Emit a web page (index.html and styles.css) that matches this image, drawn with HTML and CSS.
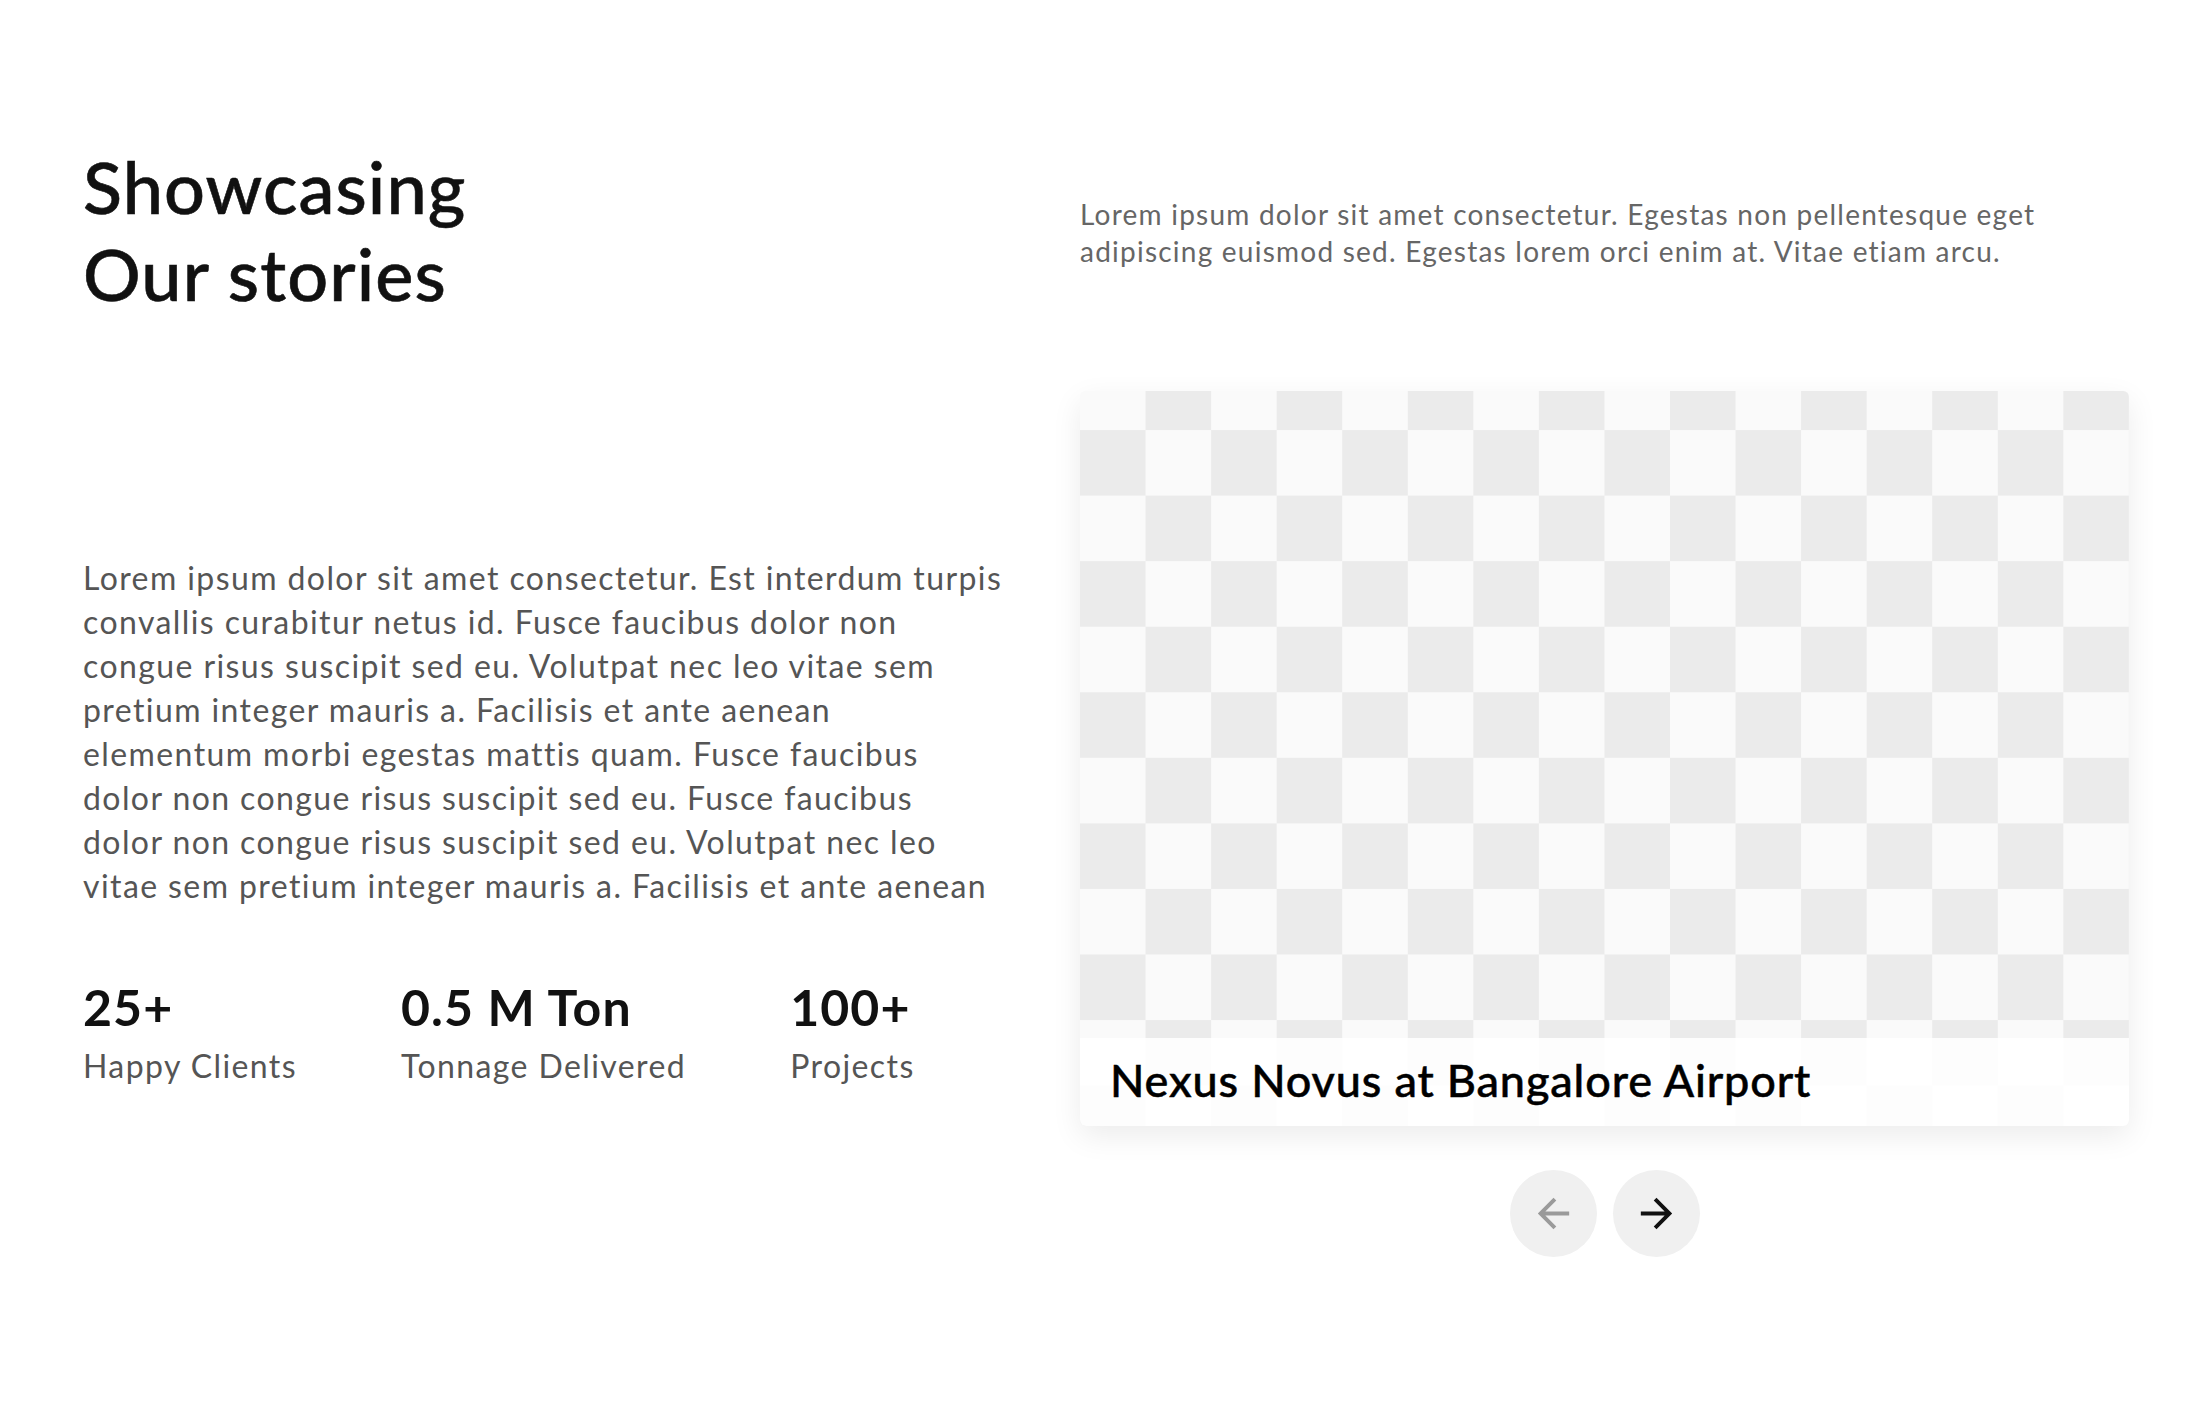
FILE: index.html
```html
<!DOCTYPE html>
<html lang="en">
<head>
<meta charset="utf-8">
<title>Showcasing Our stories</title>
<link rel="stylesheet" href="styles.css">
</head>
<body>
<main class="page">
  <section class="intro">
    <h1 class="title">Showcasing<br>Our stories</h1>
    <p class="lead">Lorem ipsum dolor sit amet consectetur. Egestas non pellentesque eget adipiscing euismod sed. Egestas lorem orci enim at. Vitae etiam arcu.</p>
  </section>
  <section class="content">
    <div class="info">
      <p class="body-text">Lorem ipsum dolor sit amet consectetur. Est interdum turpis<br>convallis curabitur netus id. Fusce faucibus dolor non<br>congue risus suscipit sed eu. Volutpat nec leo vitae sem<br>pretium integer mauris a. Facilisis et ante aenean<br>elementum morbi egestas mattis quam. Fusce faucibus<br>dolor non congue risus suscipit sed eu. Fusce faucibus<br>dolor non congue risus suscipit sed eu. Volutpat nec leo<br>vitae sem pretium integer mauris a. Facilisis et ante aenean</p>
      <div class="stats">
        <div class="stat">
          <div class="stat-num">25+</div>
          <div class="stat-label">Happy Clients</div>
        </div>
        <div class="stat">
          <div class="stat-num">0.5 M Ton</div>
          <div class="stat-label">Tonnage Delivered</div>
        </div>
        <div class="stat">
          <div class="stat-num">100+</div>
          <div class="stat-label">Projects</div>
        </div>
      </div>
    </div>
    <div class="slider">
      <div class="card">
        <div class="card-caption">Nexus Novus at Bangalore Airport</div>
      </div>
      <div class="controls">
        <button class="nav-btn nav-prev" aria-label="Previous">
          <svg viewBox="0 0 24 24" width="47" height="47"><path d="M20 11H7.83l5.59-5.59L12 4l-8 8 8 8 1.41-1.41L7.83 13H20v-2z"/></svg>
        </button>
        <button class="nav-btn nav-next" aria-label="Next">
          <svg viewBox="0 0 24 24" width="47" height="47"><path d="M12 4l-1.41 1.41L16.17 11H4v2h12.17l-5.58 5.59L12 20l8-8z"/></svg>
        </button>
      </div>
    </div>
  </section>
</main>
</body>
</html>
```
FILE: styles.css
```css
* { box-sizing: border-box; }

html, body {
  margin: 0;
  padding: 0;
  background: #ffffff;
}

body {
  font-family: "Lato", "Open Sans", sans-serif;
  color: #111111;
}

.page {
  padding: 143px 83px 0;
}

.intro {
  display: grid;
  grid-template-columns: 1fr 1049px;
  column-gap: 70px;
  align-items: start;
}

.title {
  margin: 0;
  font-size: 72px;
  line-height: 87px;
  font-weight: 500;
  letter-spacing: 0.015em;
  -webkit-text-stroke: 0.6px #111111;
  color: #111111;
}

.lead {
  margin: 53px 0 0;
  font-size: 28px;
  line-height: 37px;
  letter-spacing: 0.044em;
  color: #666666;
}

.content {
  margin-top: 74px;
  display: grid;
  grid-template-columns: 1fr 1049px;
  column-gap: 70px;
  align-items: center;
}

.info {
  padding-bottom: 6px;
}

.body-text {
  margin: 0;
  font-size: 32px;
  line-height: 44px;
  letter-spacing: 0.044em;
  white-space: nowrap;
  color: #555555;
}

.stats {
  display: flex;
  gap: 104px;
  margin-top: 69px;
}

.stat-num {
  font-size: 50px;
  line-height: 60px;
  font-weight: 700;
  letter-spacing: 0.022em;
  color: #111111;
}

.stat-label {
  margin-top: 9px;
  font-size: 32px;
  line-height: 40px;
  letter-spacing: 0.044em;
  color: #555555;
}

.slider {
  display: flex;
  flex-direction: column;
  align-items: center;
}

.card {
  width: 1049px;
  height: 735px;
  border-radius: 6px;
  overflow: hidden;
  display: flex;
  flex-direction: column;
  justify-content: flex-end;
  background-color: #fafafa;
  background-image: conic-gradient(#ebebeb 25%, #fafafa 0 50%, #ebebeb 0 75%, #fafafa 0);
  background-size: 131.12px 131.12px;
  background-position: 0 -26.5px;
  box-shadow: 0 10px 30px rgba(0, 0, 0, 0.08);
}

.card-caption {
  height: 88px;
  padding: 15px 30px 19px;
  font-size: 45px;
  line-height: 54px;
  font-weight: 500;
  letter-spacing: 0.019em;
  -webkit-text-stroke: 0.5px #000000;
  color: #000000;
  background: rgba(255, 255, 255, 0.88);
}

.controls {
  display: flex;
  gap: 16px;
  margin-top: 44px;
}

.nav-btn {
  width: 87px;
  height: 87px;
  border: none;
  border-radius: 50%;
  background: #f0f0f0;
  padding: 0;
  display: flex;
  align-items: center;
  justify-content: center;
  cursor: pointer;
}

.nav-prev svg { fill: #9a9a9a; }
.nav-next svg { fill: #111111; }
```
